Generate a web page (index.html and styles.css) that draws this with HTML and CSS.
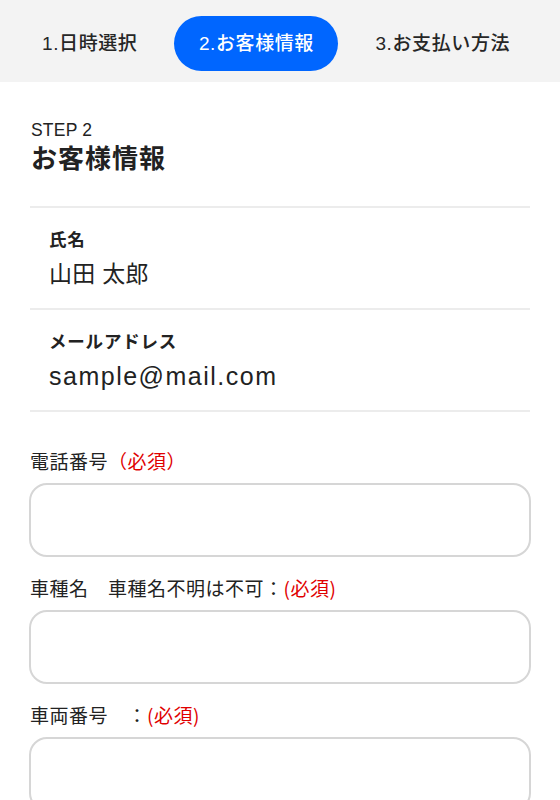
FILE: index.html
```html
<!DOCTYPE html>
<html lang="ja">
<head>
<meta charset="utf-8">
<link rel="stylesheet" href="styles.css">
</head>
<body>
<nav class="steps">
  <span class="step">1.日時選択</span>
  <span class="step active">2.お客様情報</span>
  <span class="step">3.お支払い方法</span>
</nav>
<main class="content">
  <header class="head">
    <div class="step-no">STEP 2</div>
    <h1 class="title">お客様情報</h1>
  </header>
  <dl class="info">
    <div class="info-row">
      <dt>氏名</dt>
      <dd>山田 太郎</dd>
    </div>
    <div class="info-row">
      <dt>メールアドレス</dt>
      <dd class="latin">sample@mail.com</dd>
    </div>
  </dl>
  <form class="form">
    <div class="field">
      <label class="label">電話番号<span class="req">（必須）</span></label>
      <input class="input" type="text">
    </div>
    <div class="field">
      <label class="label">車種名　車種名不明は不可：<span class="req">(必須)</span></label>
      <input class="input" type="text">
    </div>
    <div class="field">
      <label class="label">車両番号　：<span class="req">(必須)</span></label>
      <input class="input" type="text">
    </div>
  </form>
</main>
</body>
</html>
```

FILE: styles.css
```css
* { box-sizing: border-box; }
html, body { margin: 0; padding: 0; }
body {
  font-family: "Liberation Sans", "Noto Sans CJK JP", sans-serif;
  color: #222;
  background: #fff;
}
.steps {
  background: #f3f3f3;
  height: 82px;
  display: flex;
  align-items: flex-start;
  gap: 13px;
  padding: 16px 0 0 18px;
}
.step {
  font-size: 19px;
  font-weight: 500;
  letter-spacing: 0.6px;
  color: #262626;
  padding: 0 24px;
  height: 55px;
  line-height: 55px;
  border-radius: 28px;
  white-space: nowrap;
}
.step.active {
  background: #0066ff;
  color: #fff;
  width: 164px;
  text-align: center;
  padding: 0;
}
.content {
  padding: 38px 30px 0 30px;
}
.step-no {
  padding-left: 1px;
  font-size: 17.5px;
  line-height: 20px;
  letter-spacing: 0.2px;
  color: #222;
}
.title {
  margin: 3px 0 0;
  padding-left: 1px;
  font-size: 26px;
  font-weight: 700;
  line-height: 32px;
  letter-spacing: 1px;
}
.info {
  margin: 31px 0 0;
  padding: 0;
  border-top: 2px solid #ececec;
}
.info-row {
  padding: 20px 19px 19px;
  border-bottom: 2px solid #ececec;
}
.info-row dt {
  font-size: 17.5px;
  font-weight: 700;
  line-height: 24px;
  letter-spacing: 0.8px;
}
.info-row dd {
  margin: 7px 0 0;
  font-size: 23px;
  line-height: 30px;
  letter-spacing: 0.3px;
}
.info-row dd.latin {
  font-size: 25px;
  letter-spacing: 1.5px;
}
.form {
  margin-top: 38px;
  display: flex;
  flex-direction: column;
  gap: 20px;
}
.field {
  display: flex;
  flex-direction: column;
  gap: 7px;
}
.label {
  display: block;
  height: 26px;
  font-size: 19px;
  line-height: 26px;
  letter-spacing: 0.5px;
  color: #222;
}
.req {
  font-family: "Noto Sans CJK JP", sans-serif;
  line-height: 1;
  color: #e00000;
}
.input {
  display: block;
  width: calc(100% + 2px);
  margin-left: -1px;
  height: 74px;
  border: 2px solid #d6d6d6;
  border-radius: 18px;
  background: #fff;
  font-size: 17px;
  padding: 0 16px;
}
```
